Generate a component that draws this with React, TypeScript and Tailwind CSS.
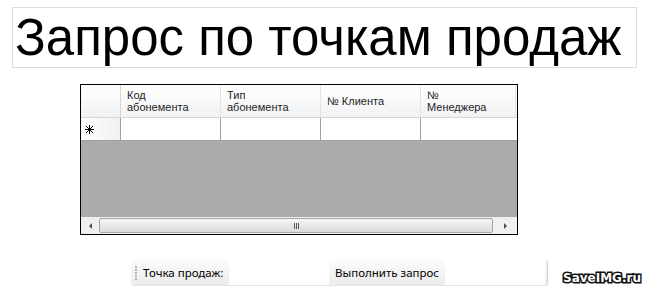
export default function App() {
  const cols = [
    { w: "w-[100px]", label: ["Код", "абонемента"] },
    { w: "w-[100px]", label: ["Тип", "абонемента"] },
    { w: "w-[100px]", label: ["№ Клиента"] },
    { w: "w-[95px]", label: ["№", "Менеджера"] },
  ];

  return (
    <div className="relative w-[648px] h-[293px] bg-white overflow-hidden">
      {/* Title */}
      <div className="ml-[12px] pt-[7px]">
        <div className="w-[625px] h-[61px] border border-[#d8dde3] flex items-center pl-[2px] font-['Liberation_Sans',Arial,sans-serif] text-[51px] leading-none text-black whitespace-nowrap">
          Запрос по точкам продаж
        </div>
      </div>

      {/* Grid */}
      <div className="ml-[80px] mt-[16px] w-[438px] h-[151px] border border-black flex flex-col font-['Liberation_Sans',Arial,sans-serif] text-[11px] leading-[12px] text-[#1e1e1e]">
        <div className="flex h-[33px] bg-gradient-to-b from-white to-[#f1f2f4] border-b border-[#d5d5d5]">
          <div className="w-[40px] border-r border-[#d5d5d5]" />
          {cols.map((c, i) => (
            <div key={i} className={`${c.w} border-r border-[#e3e3e3] flex flex-col justify-center pl-[6px]`}>
              {c.label.map((l, j) => (
                <span key={j}>{l}</span>
              ))}
            </div>
          ))}
        </div>
        <div className="flex h-[23px] border-b border-[#a0a0a0]">
          <div className="w-[40px] bg-gradient-to-r from-white to-[#eef0f2] border-r border-[#a0a0a0] flex items-center pl-[4px]">
            <svg width="9" height="9" viewBox="0 0 9 9" stroke="#000" strokeWidth="1">
              <path d="M4.5 0V9M0 4.5H9M1 1L8 8M8 1L1 8" />
            </svg>
          </div>
          {cols.map((c, i) => (
            <div key={i} className={`${c.w} bg-white ${i < 3 ? "border-r border-[#a0a0a0]" : ""}`} />
          ))}
        </div>
        <div className="flex-1 bg-[#ababab]" />
        <div className="h-[17px] bg-[#f0f0f0] flex items-center">
          <div className="w-[18px] flex justify-center">
            <div className="w-0 h-0 border-y-[3px] border-y-transparent border-r-[3px] border-r-[#505050]" />
          </div>
          <div className="w-[394px] h-[15px] rounded-[2px] border border-[#a6a6a6] bg-gradient-to-b from-[#f6f6f6] to-[#dcdcdc] flex items-center justify-center">
            <div className="flex gap-[1px]">
              <div className="w-[1px] h-[6px] bg-[#555]" />
              <div className="w-[1px] h-[6px] bg-[#555]" />
              <div className="w-[1px] h-[6px] bg-[#555]" />
            </div>
          </div>
          <div className="flex-1 flex justify-center">
            <div className="w-0 h-0 border-y-[3px] border-y-transparent border-l-[3px] border-l-[#505050]" />
          </div>
        </div>
      </div>

      {/* Toolbar */}
      <div className="ml-[131px] mt-[25px] w-[417px] h-[25px] flex items-stretch rounded-[2px] bg-gradient-to-b from-[#fbfbfb] to-[#ececec] border-r border-[#cfcfcf] shadow-[0_1px_0_#e4e4e4] font-['Noto_Sans',sans-serif] text-[11.5px] text-black whitespace-nowrap">
        <div className="w-[10px] flex flex-col justify-center items-center gap-[1px]">
          {[0, 1, 2, 3, 4].map((i) => (
            <div key={i} className="w-[2px] h-[2px] bg-[#b4b4b4]" />
          ))}
        </div>
        <div className="w-[88px] flex items-center pl-[2px]">Точка продаж:</div>
        <div className="w-[100px] bg-white" />
        <div className="w-[116px] flex items-center pl-[6px]">Выполнить запрос</div>
        <div className="w-[100px] bg-white" />
      </div>

      {/* Watermark */}
      <div className="absolute left-[563px] top-[270px] font-['DejaVu_Sans',sans-serif] font-bold text-[12px] leading-[16px] text-white [-webkit-text-stroke:3px_#111] [paint-order:stroke_fill] whitespace-nowrap">
        SaveIMG.ru
      </div>
    </div>
  );
}
